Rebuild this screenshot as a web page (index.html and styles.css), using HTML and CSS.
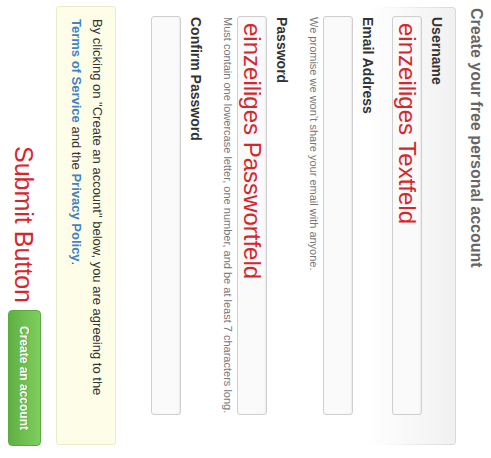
FILE: index.html
```html
<!DOCTYPE html>
<html>
<head>
<meta charset="utf-8">
<link rel="stylesheet" href="styles.css">
</head>
<body>
<div class="page">
  <h1 class="title">Create your free personal account</h1>
  <div class="panel">
    <div class="group">
      <label class="label">Username</label>
      <input class="field" type="text" value="einzeiliges Textfeld">
    </div>
    <div class="group">
      <label class="label">Email Address</label>
      <input class="field" type="text" value="">
      <p class="note">We promise we won’t share your email with anyone.</p>
    </div>
    <div class="group">
      <label class="label">Password</label>
      <input class="field" type="text" value="einzeiliges Passwortfeld">
      <p class="note">Must contain one lowercase letter, one number, and be at least 7 characters long.</p>
    </div>
    <div class="group">
      <label class="label">Confirm Password</label>
      <input class="field" type="text" value="">
    </div>
  </div>
  <div class="notice">
    By clicking on "Create an account" below, you are agreeing to the <a class="link">Terms of Service</a> and the <a class="link">Privacy Policy</a>.
  </div>
  <div class="submit-row">
    <span class="submit-label">Submit Button</span>
    <button class="btn">Create an account</button>
  </div>
</div>
</body>
</html>
```
FILE: styles.css
```css
html, body {
  margin: 0;
  padding: 0;
  overflow: hidden;
  background: #fff;
}
body {
  width: 491px;
  height: 458px;
}
.page {
  width: 458px;
  box-sizing: border-box;
  padding: 5px 0 0 0;
  font-family: "Liberation Sans", Arial, sans-serif;
  color: #333;
  transform-origin: 0 0;
  transform: translateX(491px) rotate(90deg);
}
.title {
  margin: 0 0 10px 8px;
  font-size: 16px;
  line-height: 20px;
  font-weight: bold;
  color: #666;
}
.panel {
  margin-left: 7px;
  width: 438px;
  box-sizing: border-box;
  padding: 8px 8px 10px 8px;
  border: 1px solid transparent;
  border-radius: 4px;
  background:
    linear-gradient(to bottom, #f1f1f1, #fff 90px) padding-box,
    linear-gradient(to bottom, #d8d8d8, rgba(255,255,255,0) 80px) border-box;
}
.group {
  display: flex;
  flex-direction: column;
  align-items: flex-start;
  margin-bottom: 14px;
}
.group:last-child {
  margin-bottom: 0;
}
.label {
  font-size: 14px;
  line-height: 20px;
  font-weight: bold;
  color: #333;
  margin: 0 0 5px 1px;
}
.field {
  width: 399px;
  height: 30px;
  box-sizing: border-box;
  margin: 0;
  padding: 0 6px;
  border: 1px solid #cfcfcf;
  border-radius: 3px;
  background: #fafafa;
  box-shadow: inset 0 1px 2px rgba(0,0,0,0.06);
  font-family: "Liberation Sans", Arial, sans-serif;
  font-size: 24px;
  line-height: 28px;
  color: #d6262d;
}
.note {
  margin: 2px 0 0 1px;
  font-size: 11px;
  line-height: 15px;
  color: #777;
}
.notice {
  margin: 24px 0 0 6px;
  width: 439px;
  box-sizing: border-box;
  padding: 7px 12px 9px 12px;
  border: 1px solid #ecebc8;
  border-radius: 3px;
  background: #fefee8;
  font-size: 13px;
  line-height: 21px;
  color: #333;
}
.link {
  color: #4183c4;
  font-weight: bold;
  text-decoration: none;
}
.submit-row {
  display: flex;
  justify-content: flex-end;
  align-items: center;
  gap: 7px;
  width: 446px;
  margin-top: 15px;
}
.submit-label {
  font-size: 25px;
  line-height: 30px;
  color: #d6262d;
}
.btn {
  width: 136px;
  height: 33px;
  padding: 0;
  border: 1px solid #5ca941;
  border-radius: 4px;
  background: linear-gradient(to bottom, #7fcf5f, #5fb043);
  color: #fff;
  font-family: "Liberation Sans", Arial, sans-serif;
  font-size: 12px;
  font-weight: bold;
  text-shadow: 0 -1px 0 rgba(0,0,0,0.25);
}
```
